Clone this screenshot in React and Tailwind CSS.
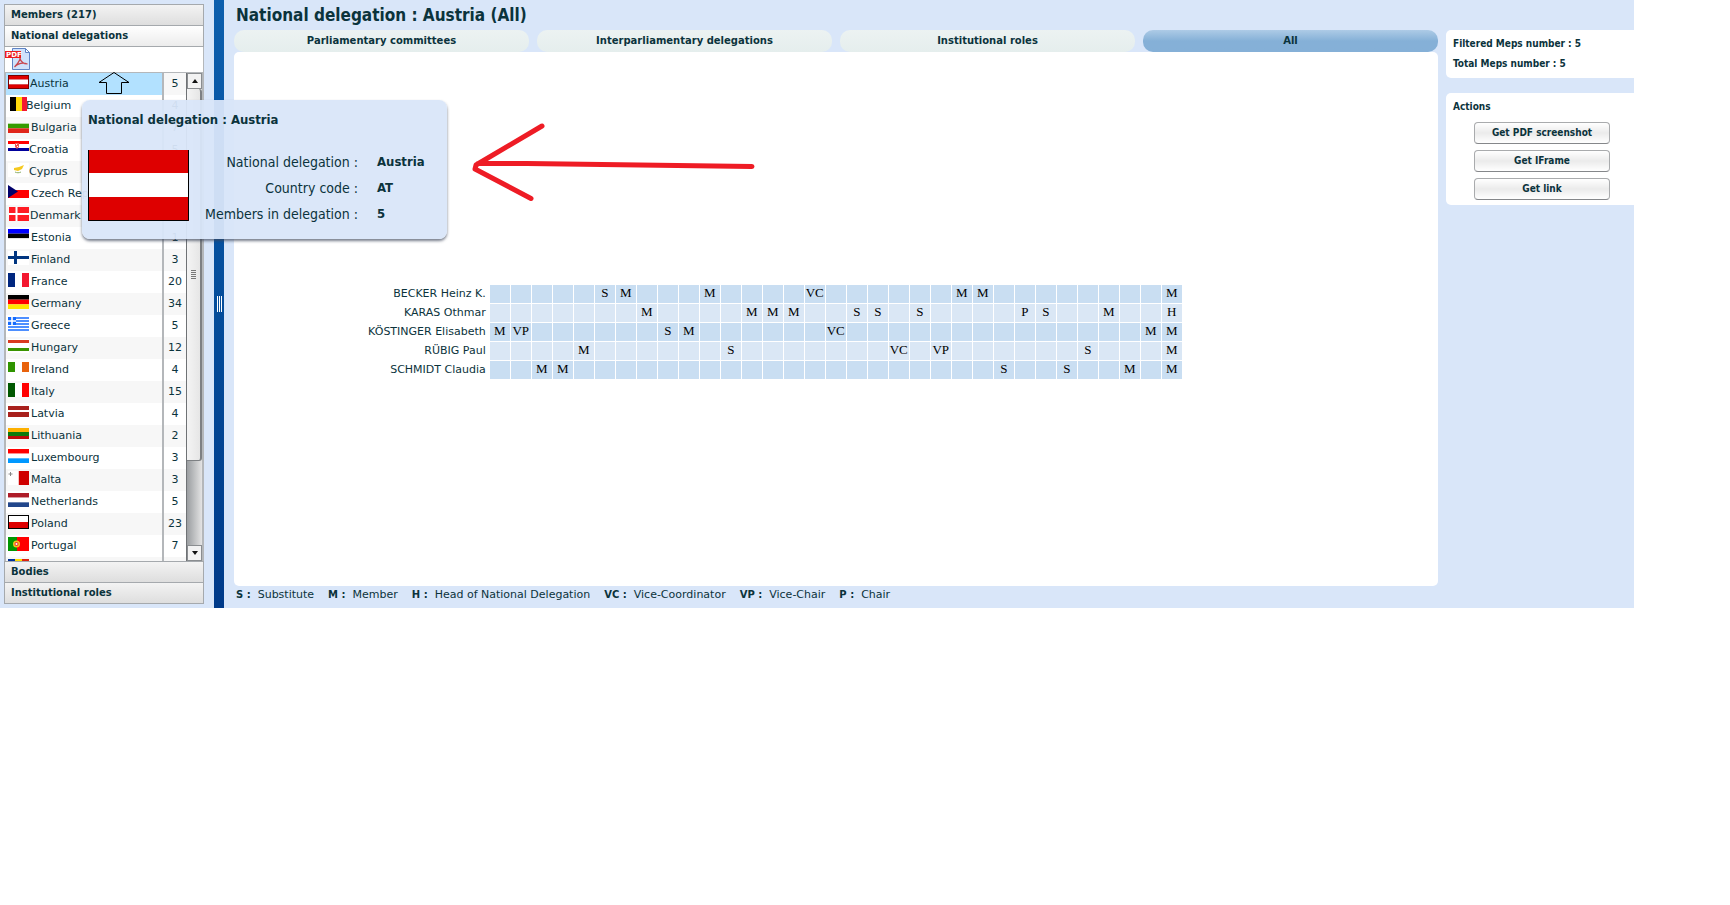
import React from 'react';

const stripes = (colors, vertical) =>
  colors.map((color, i) => {
    const size = (vertical ? 21 : 14) / colors.length;
    return vertical ? (
      <rect key={i} x={i * size} y="0" width={size} height="14" fill={color} />
    ) : (
      <rect key={i} x="0" y={i * size} width="21" height={size} fill={color} />
    );
  });

const delegations = [
  {
    name: 'Austria', count: 5, slot: 'w-[22px]', selected: true,
    flag: <>{stripes(['#de0000', '#fff', '#de0000'])}<rect x=".5" y=".5" width="20" height="13" fill="none" stroke="#700" /></>,
  },
  {
    name: 'Belgium', count: 4, slot: 'w-[18px]',
    flag: <><rect x="2" width="6" height="14" /><rect x="8" width="6" height="14" fill="#ffd90c" /><rect x="14" width="5" height="14" fill="#f31830" /></>,
  },
  { name: 'Bulgaria', count: 7, flag: stripes(['#f8faf8', '#359c00', '#e0261a']) },
  {
    name: 'Croatia', count: 5, slot: 'w-[21px]',
    flag: <><rect width="21" height="3" fill="#f00" /><rect y="3" width="21" height="4" fill="#fff" /><rect y="7" width="21" height="3" fill="#00009c" /><path d="M7 2h4v4l-2 2-2-2z" fill="#e55" /><path d="M8 3h1v1h-1zM9 5h1v1h-1z" fill="#fff" /></>,
  },
  {
    name: 'Cyprus', count: 3, slot: 'w-[21px]',
    flag: <><rect width="21" height="14" fill="#fff" /><path d="M6 5l5-1 5-2-2 4-4 2-4-1z" fill="#f5c920" /><path d="M7 9c2 1 4 1 6 0" fill="none" stroke="#8cae6a" /></>,
  },
  { name: 'Czech Republic', count: 15, flag: <><rect width="21" height="7" fill="#fff" /><rect y="5" width="21" height="8" fill="#f00" /><path d="M0 0l10 6.500-10 6.500z" fill="#00006b" /></> },
  {
    name: 'Denmark', count: 1, slot: 'w-[22px]',
    flag: <><rect x="1" width="20" height="14" fill="#ff1c24" /><path d="M8.500 0v14M1 7h20" stroke="#fff" strokeWidth="2" /></>,
  },
  { name: 'Estonia', count: 1, flag: stripes(['#0000ff', '#000', '#fff']) },
  { name: 'Finland', count: 3, flag: <><rect width="21" height="14" fill="#fff" /><path d="M7.500 0v13M0 6.500h21" stroke="#003580" strokeWidth="3" /></> },
  { name: 'France', count: 20, flag: stripes(['#00267f', '#fff', '#f31830'], true) },
  { name: 'Germany', count: 34, flag: stripes(['#000', '#f00', '#ffe600']) },
  {
    name: 'Greece', count: 5,
    flag: <><rect width="21" height="14" fill="#fff" /><path d="M0 1h21M0 4h21M0 7h21M0 10h21M0 13h21" stroke="#146bff" strokeWidth="1.600" /><rect width="8" height="8" fill="#146bff" /><path d="M4 0v8M0 4h8" stroke="#fff" strokeWidth="1.600" /></>,
  },
  { name: 'Hungary', count: 12, flag: <><rect width="21" height="14" fill="#fff" /><rect y="1" width="21" height="3" fill="#d93a20" /><rect y="9" width="21" height="3" fill="#3a9400" /></> },
  { name: 'Ireland', count: 4, flag: <><rect y="1" width="7" height="10" fill="#2f9400" /><rect x="7" y="1" width="7" height="10" fill="#fff" /><rect x="14" y="1" width="7" height="10" fill="#e8620c" /></> },
  { name: 'Italy', count: 15, flag: stripes(['#005700', '#fff', '#f00'], true) },
  { name: 'Latvia', count: 4, flag: <><rect width="21" height="14" fill="#fff" /><rect y="1" width="21" height="4" fill="#a8201c" /><rect y="7" width="21" height="5" fill="#a8201c" /></> },
  { name: 'Lithuania', count: 2, flag: <><rect y="1" width="21" height="4" fill="#fdb000" /><rect y="5" width="21" height="4" fill="#0b7a0b" /><rect y="9" width="21" height="3" fill="#bb0a0a" /></> },
  { name: 'Luxembourg', count: 3, flag: stripes(['#f00', '#fff', '#0098ff']) },
  { name: 'Malta', count: 3, flag: <><rect width="10" height="14" fill="#fff" /><rect x="10" width="11" height="14" fill="#cf0000" /><path d="M10.500 0v14" stroke="#f6c4c4" /><path d="M2.500 1v4M.5 3h4" stroke="#888" /></> },
  { name: 'Netherlands', count: 5, flag: stripes(['#ae1c28', '#fff', '#21468b']) },
  { name: 'Poland', count: 23, flag: <><rect width="21" height="7" fill="#fff" /><rect y="7" width="21" height="7" fill="#de0000" /><rect x=".5" y=".5" width="20" height="13" fill="none" stroke="#000" /></> },
  {
    name: 'Portugal', count: 7,
    flag: <><rect width="9" height="14" fill="#009600" /><rect x="9" width="12" height="14" fill="#f00" /><circle cx="8.500" cy="7" r="3.500" fill="#f0c020" /><circle cx="8.500" cy="7" r="2" fill="#e33" /><circle cx="8.500" cy="7" r="1" fill="#fff" /></>,
  },
  // only the top of this flag shows above the fold of the list
  { flag: stripes(['#00319c', '#ffde00', '#de2110'], true) },
];

const columns = Array.from({ length: 33 }, (_, i) => i);

const members = [
  { name: 'BECKER Heinz K.', roles: { 5: 'S', 6: 'M', 10: 'M', 15: 'VC', 22: 'M', 23: 'M', 32: 'M' } },
  { name: 'KARAS Othmar', roles: { 7: 'M', 12: 'M', 13: 'M', 14: 'M', 17: 'S', 18: 'S', 20: 'S', 25: 'P', 26: 'S', 29: 'M', 32: 'H' } },
  { name: 'KÖSTINGER Elisabeth', roles: { 0: 'M', 1: 'VP', 8: 'S', 9: 'M', 16: 'VC', 31: 'M', 32: 'M' } },
  { name: 'RÜBIG Paul', roles: { 4: 'M', 11: 'S', 19: 'VC', 21: 'VP', 28: 'S', 32: 'M' } },
  { name: 'SCHMIDT Claudia', roles: { 2: 'M', 3: 'M', 24: 'S', 27: 'S', 30: 'M', 32: 'M' } },
];

const tabs = ['Parliamentary committees', 'Interparliamentary delegations', 'Institutional roles', 'All'];

const legend = [
  ['S :', 'Substitute'],
  ['M :', 'Member'],
  ['H :', 'Head of National Delegation'],
  ['VC :', 'Vice-Coordinator'],
  ['VP :', 'Vice-Chair'],
  ['P :', 'Chair'],
];

function AccordionHeader({ children, open }) {
  return (
    <button
      className={`block h-[22px] w-full border border-[#a5a9ad] px-[6px] text-left text-[10px] leading-[18px] font-bold ${
        open ? 'bg-linear-to-b from-white to-[#ececec]' : 'bg-linear-to-b from-[#f3f3f3] to-[#dedede]'
      }`}
    >
      {children}
    </button>
  );
}

function PdfIcon() {
  return (
    <svg className="block h-6 w-[26px]" viewBox="0 0 26 24">
      <path d="M7.500 1.500h13l4 4v17h-17z" fill="#cfe2fb" stroke="#5f83c4" />
      <path d="M20.500 1.500v4h4z" fill="#fff" stroke="#5f83c4" />
      <path d="M14.500 10c2 0 0 5-5 10 3-3 7-5 13-3-4 0-7-3-8-7z" fill="none" stroke="#c8454d" strokeWidth="1.200" />
      <rect y="4" width="16" height="7" fill="#ee1c1c" />
      <text x="1" y="10" fontSize="7" fontWeight="bold" fontFamily="DejaVu Sans, sans-serif" fill="#fff">PDF</text>
    </svg>
  );
}

function Scrollbar() {
  return (
    <div className="flex w-4 flex-none flex-col border-l border-[#6f7275] bg-linear-to-r from-[#9b9ea1] to-[#e4e4e4]">
      <button aria-label="Scroll up" className="flex h-4 items-center justify-center border border-[#8a8d90] bg-[#f2f2f2]">
        <svg className="h-1 w-2" viewBox="0 0 8 4"><path d="M4 0l3 4H1z" fill="#111" /></svg>
      </button>
      <div className="flex h-[372px] items-center justify-center rounded-r-[3px] border-r-2 border-b border-[#7d8083] bg-linear-to-r from-[#f4f4f4] to-[#e6e6e6]">
        <svg className="h-[10px] w-[5px]" viewBox="0 0 5 10"><path d="M0 .5h5M0 2.500h5M0 4.500h5M0 6.500h5M0 8.500h5" stroke="#777" /></svg>
      </div>
      <button aria-label="Scroll down" className="mt-auto flex h-4 items-center justify-center border border-[#8a8d90] bg-[#f2f2f2]">
        <svg className="h-1 w-2" viewBox="0 0 8 4"><path d="M1 0h6L4 4z" fill="#111" /></svg>
      </button>
    </div>
  );
}

function Sidebar() {
  return (
    <nav className="w-[214px] flex-none py-1 pr-[10px] pl-1">
      <AccordionHeader>Members (217)</AccordionHeader>
      <div className="-mt-px">
        <AccordionHeader open>National delegations</AccordionHeader>
      </div>
      <div className="h-[25px] border-r border-l border-[#b4b7ba] bg-white">
        <button aria-label="Export PDF" className="block"><PdfIcon /></button>
      </div>
      <div className="flex h-[490px] overflow-hidden border-x-2 border-t border-b border-[#b4b7ba] bg-white">
        <div className="flex-1 overflow-hidden">
          <table className="w-full border-separate border-spacing-0 text-[11px]">
            <tbody>
              {delegations.map((d, i) => (
                <tr key={i} className={d.selected ? 'bg-[#b2e1ff]' : i % 2 ? 'bg-white' : 'bg-[#f7f7f7]'}>
                  <td className="h-[22px] p-0 pl-[2px]">
                    <div className="flex h-[22px] items-start leading-[22px]">
                      <span className={`${d.slot || 'w-[23px]'} flex-none pt-[2px]`}>
                        <svg className="block h-[14px] w-[21px]" viewBox="0 0 21 14">{d.flag}</svg>
                      </span>
                      <span className="whitespace-nowrap">{d.name}</span>
                    </div>
                  </td>
                  <td className={`w-6 border-l-2 border-[#b4b7ba] p-0 text-center leading-5 ${i % 2 ? 'bg-white' : 'bg-[#f7f7f7]'}`}>{d.count}</td>
                </tr>
              ))}
            </tbody>
          </table>
        </div>
        <Scrollbar />
      </div>
      <div className="-mt-px">
        <AccordionHeader>Bodies</AccordionHeader>
      </div>
      <div className="-mt-px">
        <AccordionHeader>Institutional roles</AccordionHeader>
      </div>
    </nav>
  );
}

function RolesTable() {
  return (
    <table className="border-collapse">
      <tbody>
        {members.map((m, i) => (
          <tr key={m.name}>
            <th scope="row" className="h-[19px] w-[124px] p-0 pr-[3px] text-right text-[11px] leading-[18px] font-normal whitespace-nowrap">
              {m.name}
            </th>
            {columns.map((c) => (
              <td
                key={c}
                className={`w-[21px] min-w-[21px] border border-white p-0 pb-[2px] text-center font-['Liberation_Serif',serif] text-[13px] leading-4 text-black ${
                  i % 2 ? 'bg-[#dae7f5]' : 'bg-[#c9def2]'
                }`}
              >
                {m.roles[c]}
              </td>
            ))}
          </tr>
        ))}
      </tbody>
    </table>
  );
}

function ActionButton({ children }) {
  return (
    <button className="h-[22px] w-[136px] rounded-[4px] border border-[#a9abad] border-b-[#85878a] bg-linear-to-b from-white via-[#ebebeb] to-white pb-[2px] font-['DejaVu_Sans_Condensed','DejaVu_Sans',sans-serif] text-[10px] font-bold">
      {children}
    </button>
  );
}

function Tooltip() {
  return (
    <div role="tooltip" className="absolute top-[100px] left-[82px] w-[365px] rounded-lg bg-[#d9e6f9]/95 px-[6px] pt-[11px] pb-3 font-['DejaVu_Sans_Condensed','DejaVu_Sans',sans-serif] shadow-[0_2px_3px_rgba(60,70,90,0.7)]">
      <h2 className="text-[13px] leading-[18px] font-bold">National delegation : Austria</h2>
      <div className="mt-5 flex">
        <svg className="mt-px block h-[71px] w-[101px] flex-none" viewBox="0 0 101 71">
          <rect width="101" height="71" fill="#de0000" />
          <rect y="23" width="101" height="24" fill="#fff" />
          <path d="M.5 0v70.500h100V0" fill="none" stroke="#000" />
        </svg>
        <dl className="grid flex-1 grid-cols-[169px_1fr] gap-x-[19px] leading-[26px]">
          <dt className="text-right text-[14px] leading-[26px]">National delegation :</dt>
          <dd className="text-[13px] font-bold">Austria</dd>
          <dt className="text-right text-[14px] leading-[26px]">Country code :</dt>
          <dd className="text-[13px] font-bold">AT</dd>
          <dt className="text-right text-[14px] leading-[26px]">Members in delegation :</dt>
          <dd className="text-[13px] font-bold">5</dd>
        </dl>
      </div>
    </div>
  );
}

export default function App() {
  return (
    <div className="min-h-screen bg-white pr-24 font-['DejaVu_Sans',sans-serif] text-[#0b333c]">
      <div className="relative flex bg-[#d9e6f9]">
        <Sidebar />

        {/* Splitter */}
        <div className="flex w-[10px] flex-none items-center justify-center bg-linear-to-b from-[#0d5fad] to-[#003a89]">
          <svg className="h-4 w-[5px]" viewBox="0 0 5 16"><path d="M.5 0v16M2.500 0v16M4.500 0v16" stroke="#fff" /></svg>
        </div>

        <div className="flex flex-1 pl-[10px]">
          <main className="flex flex-1 flex-col">
            <h1 className="h-[30px] pl-[2px] font-['DejaVu_Sans_Condensed','DejaVu_Sans',sans-serif] text-[17px] leading-[30px] font-bold">
              National delegation : Austria (All)
            </h1>
            <div role="tablist" className="grid grid-cols-4 gap-2">
              {tabs.map((tab) => (
                <button
                  key={tab}
                  role="tab"
                  aria-selected={tab === 'All'}
                  className={`h-[22px] rounded-[10px] pb-[2px] text-[10px] font-bold ${
                    tab === 'All' ? 'bg-linear-to-b from-[#adcbe6] to-[#85b0d7] to-50%' : 'bg-linear-to-b from-[#ecf2f2] to-[#e5eeed]'
                  }`}
                >
                  {tab}
                </button>
              ))}
            </div>
            <section className="flex min-h-[534px] flex-1 items-start justify-center rounded-[5px] bg-white pt-[232px] pr-[124px]">
              <RolesTable />
            </section>
            <footer className="flex h-[22px] gap-[14px] pl-[2px] text-[11px] leading-[17px]">
              {legend.map(([key, label]) => (
                <span key={key} className="flex gap-[7px]">
                  <b className="text-[10px]">{key}</b>
                  <span>{label}</span>
                </span>
              ))}
            </footer>
          </main>

          <aside className="ml-2 w-[188px] flex-none pt-[30px] font-['DejaVu_Sans_Condensed','DejaVu_Sans',sans-serif] text-[10px] font-bold">
            <div className="rounded-l-[5px] bg-white px-[7px] py-1 leading-5">
              <p>Filtered Meps number : 5</p>
              <p>Total Meps number : 5</p>
            </div>
            <div className="mt-[15px] rounded-l-[5px] bg-white px-[7px] pt-1 pb-[5px]">
              <h2 className="leading-5">Actions</h2>
              <div className="mt-[5px] flex flex-col items-center gap-[6px] pl-1">
                <ActionButton>Get PDF screenshot</ActionButton>
                <ActionButton>Get IFrame</ActionButton>
                <ActionButton>Get link</ActionButton>
              </div>
            </div>
          </aside>
        </div>

        <Tooltip />

        {/* Hover pointer over the selected row */}
        <svg className="absolute top-[72px] left-[98px] h-[23px] w-8" viewBox="0 0 32 23">
          <path d="M16 .5L1 10.500h7.500v11h15v-11H31z" fill="none" stroke="#000" />
        </svg>

        {/* Hand-drawn marker arrow */}
        <svg className="absolute top-[120px] left-[470px] h-[84px] w-[290px]" viewBox="0 0 290 84">
          <path d="M72 6L6 45L5 49L61 78.500M8 43.500L57 43.500L282 46.500" fill="none" stroke="#ee1c25" strokeWidth="5" strokeLinecap="round" strokeLinejoin="round" />
        </svg>
      </div>
    </div>
  );
}
